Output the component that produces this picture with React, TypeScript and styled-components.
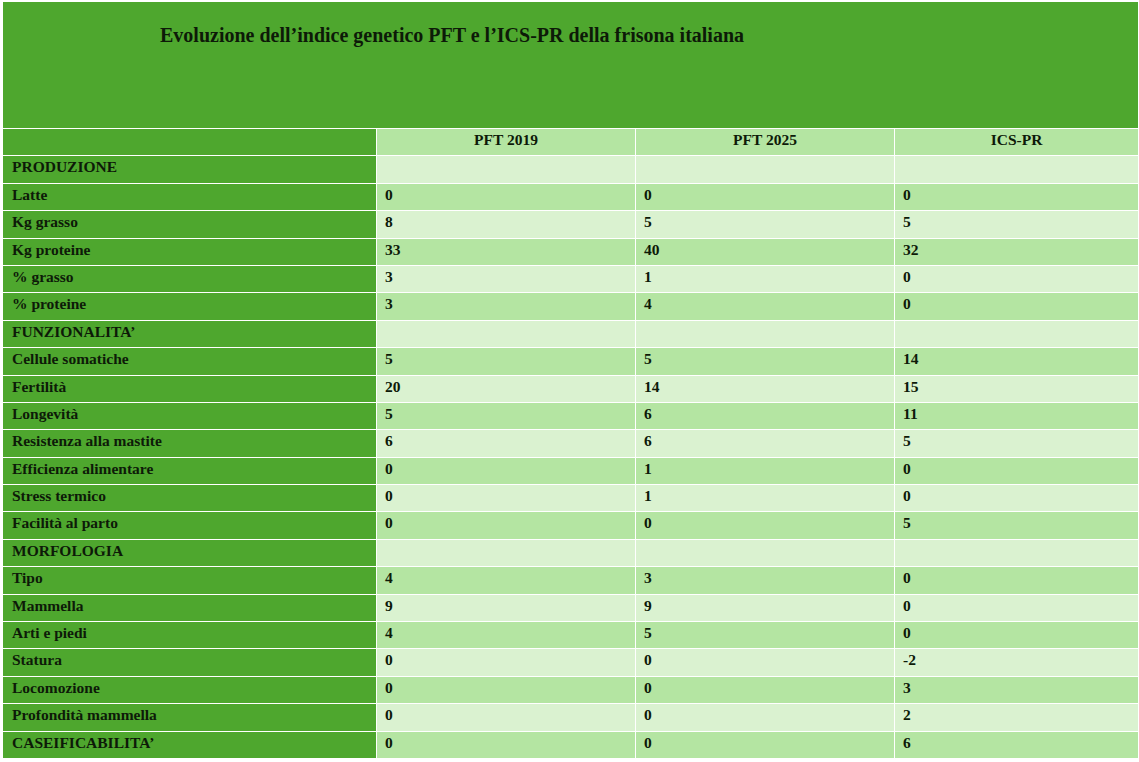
import React from 'react';
import styled, { createGlobalStyle } from 'styled-components';

const GlobalStyle = createGlobalStyle`
  body {
    margin: 0;
    background: #ffffff;
    font-family: "Liberation Serif", "Times New Roman", serif;
  }
`;

type Row = { label: string; values: string[] };

const rows: Row[] = [
  { label: 'PRODUZIONE', values: ['', '', ''] },
  { label: 'Latte', values: ['0', '0', '0'] },
  { label: 'Kg grasso', values: ['8', '5', '5'] },
  { label: 'Kg proteine', values: ['33', '40', '32'] },
  { label: '% grasso', values: ['3', '1', '0'] },
  { label: '% proteine', values: ['3', '4', '0'] },
  { label: 'FUNZIONALITA’', values: ['', '', ''] },
  { label: 'Cellule somatiche', values: ['5', '5', '14'] },
  { label: 'Fertilità', values: ['20', '14', '15'] },
  { label: 'Longevità', values: ['5', '6', '11'] },
  { label: 'Resistenza alla mastite', values: ['6', '6', '5'] },
  { label: 'Efficienza alimentare', values: ['0', '1', '0'] },
  { label: 'Stress termico', values: ['0', '1', '0'] },
  { label: 'Facilità al parto', values: ['0', '0', '5'] },
  { label: 'MORFOLOGIA', values: ['', '', ''] },
  { label: 'Tipo', values: ['4', '3', '0'] },
  { label: 'Mammella', values: ['9', '9', '0'] },
  { label: 'Arti e piedi', values: ['4', '5', '0'] },
  { label: 'Statura', values: ['0', '0', '-2'] },
  { label: 'Locomozione', values: ['0', '0', '3'] },
  { label: 'Profondità mammella', values: ['0', '0', '2'] },
  { label: 'CASEIFICABILITA’', values: ['0', '0', '6'] },
];

const headers = ['PFT 2019', 'PFT 2025', 'ICS-PR'];

function App() {
  return (
    <>
      <GlobalStyle />
      <Page>
        <TitleBox>
          <h1>Evoluzione dell’indice genetico PFT e l’ICS-PR della frisona italiana</h1>
        </TitleBox>
        <Table>
          <LabelCell />
          {headers.map((h) => (
            <ValueCell key={h} $light={false} $center>
              {h}
            </ValueCell>
          ))}
          {rows.map((r, i) => (
            <React.Fragment key={r.label}>
              <LabelCell>{r.label}</LabelCell>
              {r.values.map((v, j) => (
                <ValueCell key={j} $light={i % 2 === 0}>
                  {v}
                </ValueCell>
              ))}
            </React.Fragment>
          ))}
        </Table>
      </Page>
    </>
  );
}

export default App;

const Page = styled.div`
  padding: 2px 2px 0 3px;
  width: 1135px;
`;

const TitleBox = styled.div`
  height: 126px;
  background-color: #4ea72e;
  padding: 21px 0 0 157px;
  box-sizing: border-box;
  h1 {
    margin: 0;
    font-size: 20px;
    line-height: 24px;
    font-weight: bold;
    color: #0d1a08;
  }
`;

const Table = styled.div`
  display: grid;
  grid-template-columns: 373px 258px 258px 243px;
  grid-auto-rows: 26.4px;
  gap: 1px;
  padding-top: 1px;
  background-color: #ffffff;
  font-size: 15.5px;
  font-weight: bold;
  color: #0d1a08;
`;

const LabelCell = styled.div`
  background-color: #4ea72e;
  padding: 2px 0 0 9px;
  line-height: 18px;
  white-space: nowrap;
`;

const ValueCell = styled.div<{ $light: boolean; $center?: boolean }>`
  background-color: ${(p) => (p.$light ? '#daf2d0' : '#b4e5a2')};
  padding: 2px 8px 0 8px;
  line-height: 18px;
  text-align: ${(p) => (p.$center ? 'center' : 'left')};
`;
